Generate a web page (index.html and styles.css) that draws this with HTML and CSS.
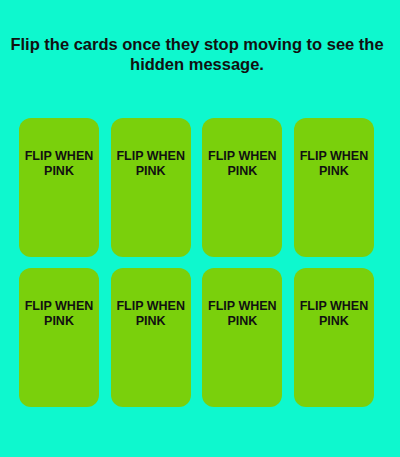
FILE: index.html
```html
<!DOCTYPE html>
<html>
<head>
<meta charset="utf-8">
<link rel="stylesheet" href="styles.css">
</head>
<body>
<h1 class="title">Flip the cards once they stop moving to see the hidden message.</h1>
<div class="grid">
  <div class="card">FLIP WHEN PINK</div>
  <div class="card">FLIP WHEN PINK</div>
  <div class="card">FLIP WHEN PINK</div>
  <div class="card">FLIP WHEN PINK</div>
  <div class="card">FLIP WHEN PINK</div>
  <div class="card">FLIP WHEN PINK</div>
  <div class="card">FLIP WHEN PINK</div>
  <div class="card">FLIP WHEN PINK</div>
</div>
</body>
</html>
```
FILE: styles.css
```css
html, body {
  margin: 0;
  padding: 0;
  background: #0ef8ce;
  font-family: "Liberation Sans", Arial, sans-serif;
}
body {
  width: 394px;
  padding-top: 34px;
}
.title {
  margin: 0;
  font-size: 16.5px;
  line-height: 20px;
  font-weight: bold;
  text-align: center;
  color: #111;
}
.grid {
  display: grid;
  grid-template-columns: repeat(4, 80px);
  grid-auto-rows: 139px;
  column-gap: 11.67px;
  row-gap: 11px;
  margin: 44px 0 0 19px;
}
.card {
  background: #7ad00c;
  border-radius: 12px;
  color: #111;
  font-weight: bold;
  font-size: 12.5px;
  line-height: 15px;
  text-align: center;
  padding: 31px 2px 0;
}
```
